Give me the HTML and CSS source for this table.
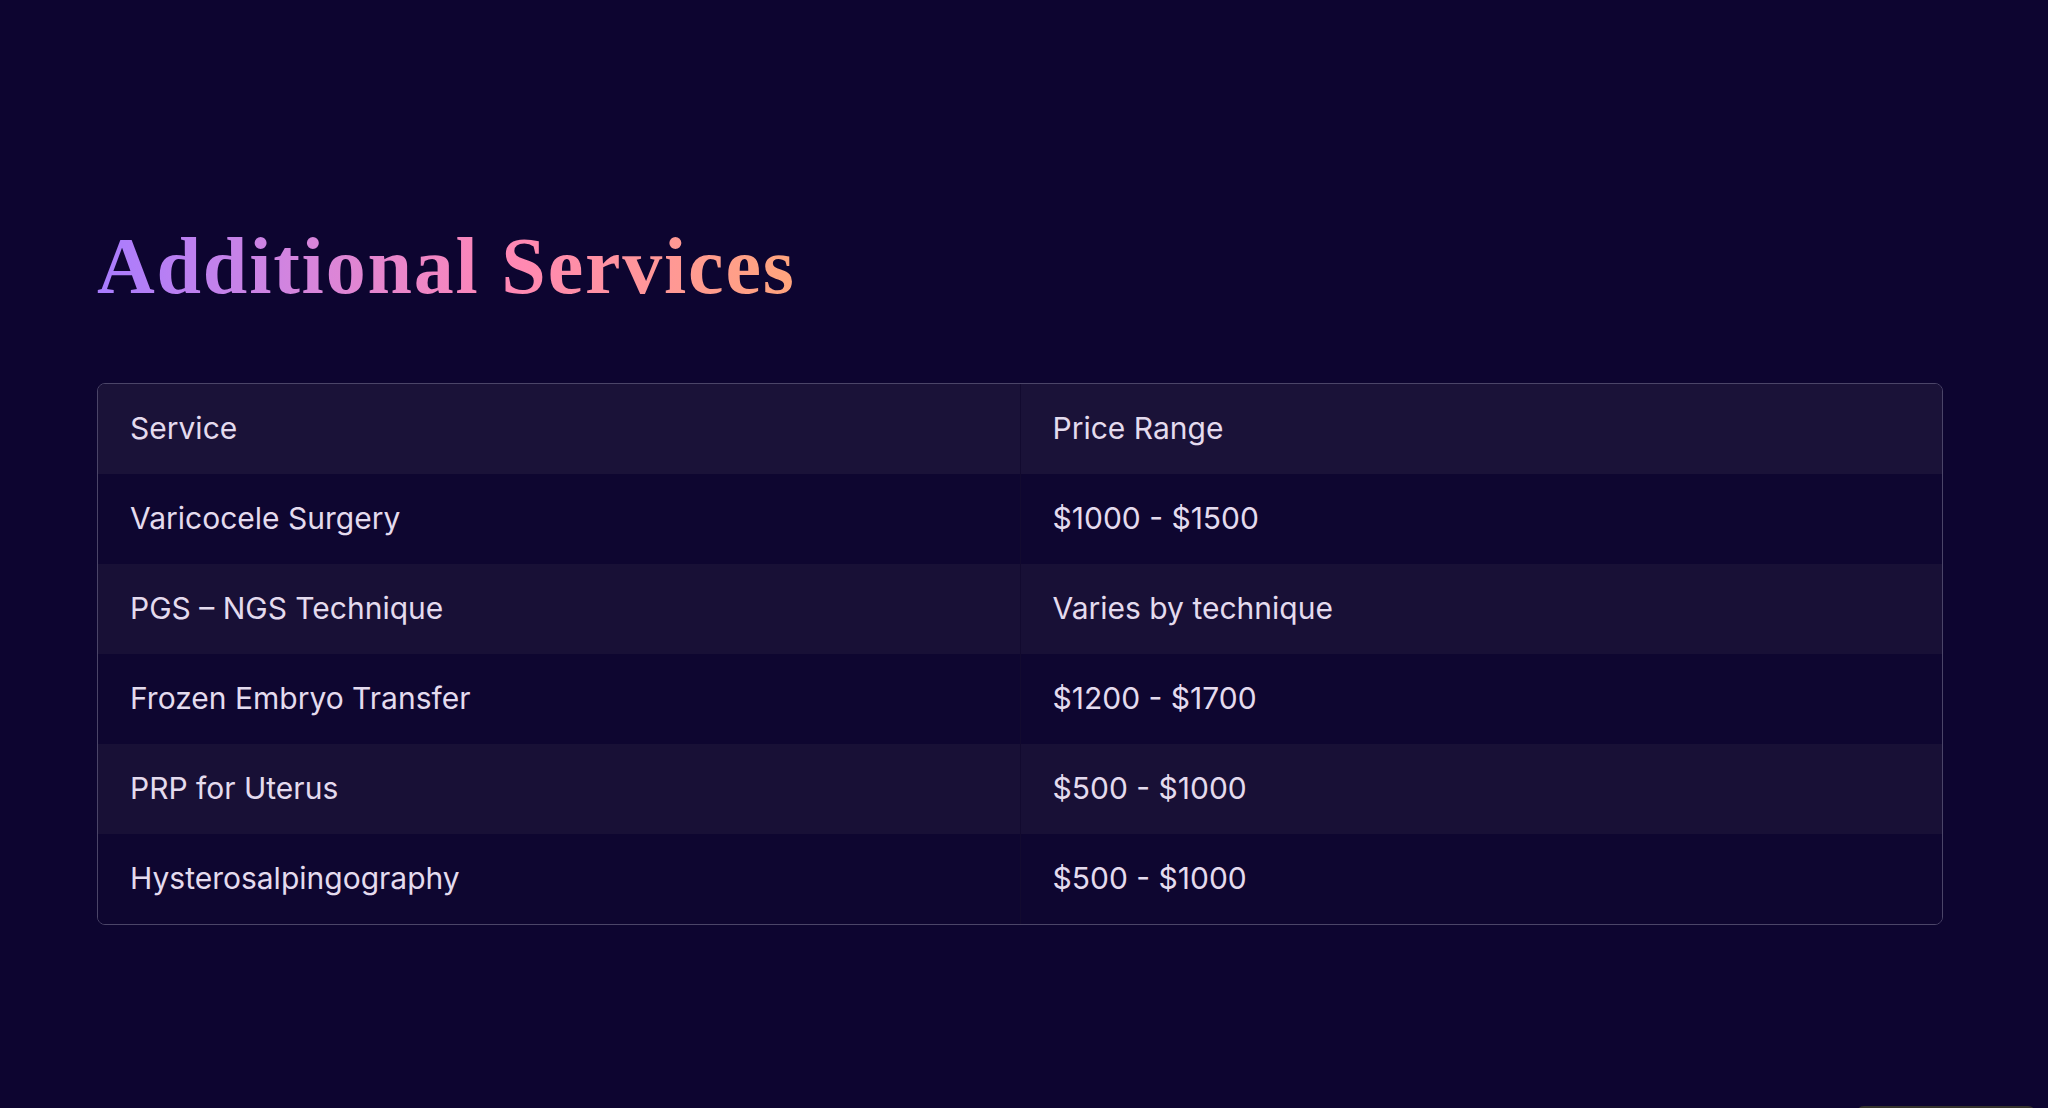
FILE: index.html
```html
<!DOCTYPE html>
<html lang="en">
<head>
<meta charset="utf-8">
<title>Additional Services</title>
<link rel="stylesheet" href="styles.css">
</head>
<body>
<main class="page">
  <section class="services">
    <h1 class="title">Additional Services</h1>
    <div class="table-wrap">
      <table class="price-table">
        <thead>
          <tr><th>Service</th><th>Price Range</th></tr>
        </thead>
        <tbody>
          <tr><td>Varicocele Surgery</td><td>$1000 - $1500</td></tr>
          <tr><td>PGS – NGS Technique</td><td>Varies by technique</td></tr>
          <tr><td>Frozen Embryo Transfer</td><td>$1200 - $1700</td></tr>
          <tr><td>PRP for Uterus</td><td>$500 - $1000</td></tr>
          <tr><td>Hysterosalpingography</td><td>$500 - $1000</td></tr>
        </tbody>
      </table>
    </div>
  </section>
</main>
<div class="corner-widget"></div>
</body>
</html>
```
FILE: styles.css
```css
html, body {
  margin: 0;
  padding: 0;
}
body {
  background: #0d0530;
  min-height: 1108px;
  font-family: Inter, "Noto Sans", sans-serif;
  color: #e4dbee;
  overflow: hidden;
}
.page {
  padding: 218px 105px 0 97px;
}
.title {
  display: inline-block;
  margin: 0;
  font-family: "Liberation Serif", serif;
  font-weight: 700;
  font-size: 80px;
  letter-spacing: 1.8px;
  line-height: 1.2;
  background: linear-gradient(90deg, #a87cff 0%, #d685dc 30%, #ff87b6 58%, #ffa57c 100%);
  -webkit-background-clip: text;
  background-clip: text;
  color: transparent;
}
.table-wrap {
  margin-top: 69px;
  border: 1px solid #4b4568;
  border-radius: 8px;
  overflow: hidden;
}
.price-table {
  width: 100%;
  border-collapse: collapse;
  table-layout: fixed;
}
.price-table th,
.price-table td {
  text-align: left;
  font-weight: 400;
  font-size: 30px;
  line-height: 42px;
  padding: 23px 32px 25px;
}
.price-table th + th,
.price-table td + td {
  border-left: 1px solid #120a2f;
}
.price-table thead tr {
  background: #1a1238;
}
.price-table tbody tr {
  background: #0e0630;
}
.price-table tbody tr:nth-child(even) {
  background: #181036;
}
.corner-widget {
  position: fixed;
  right: 12px;
  bottom: -40px;
  width: 180px;
  height: 42px;
  border-radius: 8px;
  background: #35332c;
}
```
